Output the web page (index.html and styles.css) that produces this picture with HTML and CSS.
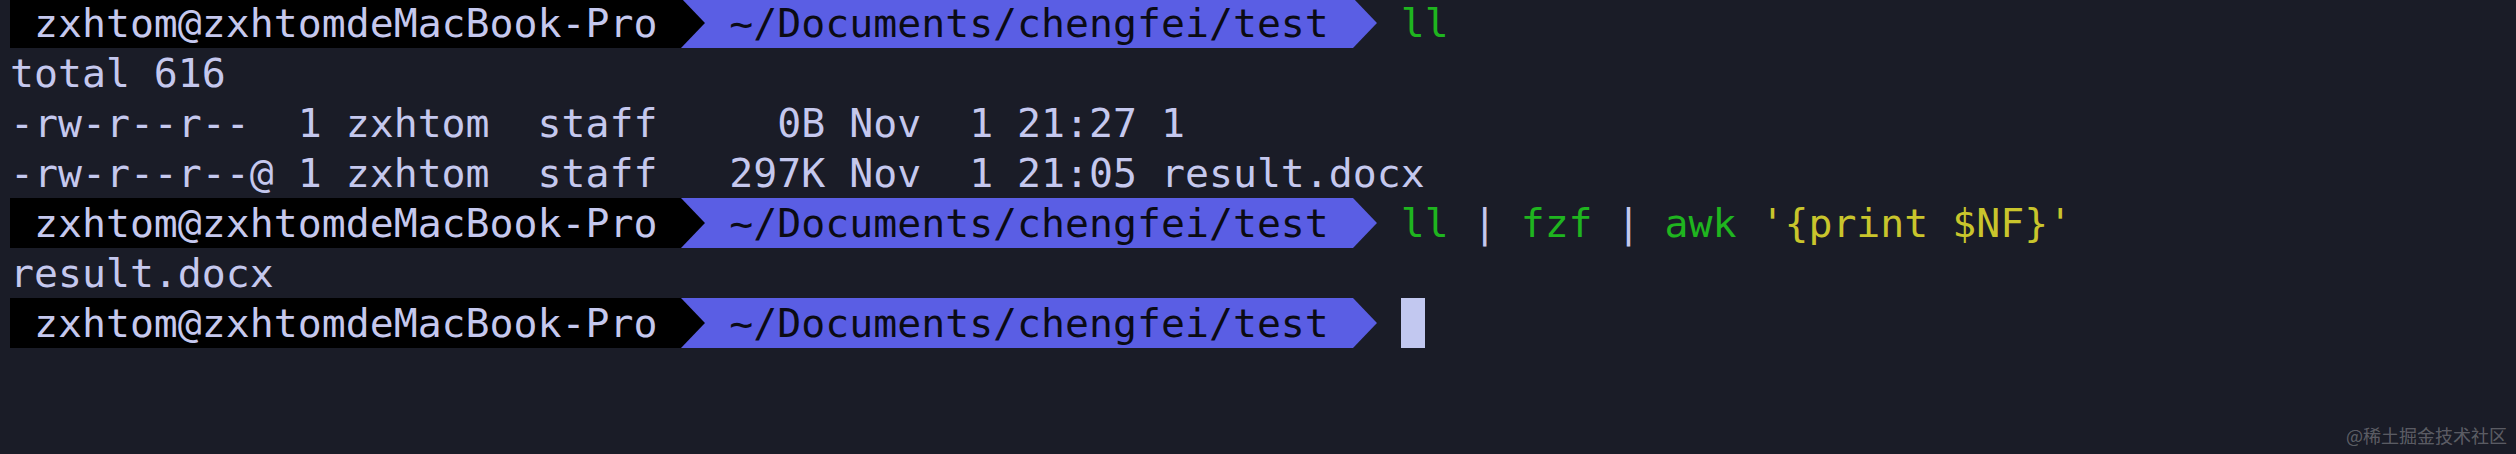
FILE: index.html
```html
<!DOCTYPE html>
<html lang="zh">
<head>
<meta charset="utf-8">
<title>Terminal</title>
<link rel="stylesheet" href="styles.css">
</head>
<body>
<div class="term">
  <div class="line">
    <span class="seg host"> zxhtom@zxhtomdeMacBook-Pro </span><span class="sep sep-host"><svg viewBox="0 0 24 50" preserveAspectRatio="none"><polygon points="0,0 24,25 0,50"/></svg></span><span class="seg path"> ~/Documents/chengfei/test </span><span class="sep sep-path"><svg viewBox="0 0 24 50" preserveAspectRatio="none"><polygon points="0,0 24,25 0,50"/></svg></span><span class="txt"> </span><span class="cmd">ll</span>
  </div>
  <div class="line"><span class="txt">total 616</span></div>
  <div class="line"><span class="txt">-rw-r--r--  1 zxhtom  staff     0B Nov  1 21:27 1</span></div>
  <div class="line"><span class="txt">-rw-r--r--@ 1 zxhtom  staff   297K Nov  1 21:05 result.docx</span></div>
  <div class="line">
    <span class="seg host"> zxhtom@zxhtomdeMacBook-Pro </span><span class="sep sep-host"><svg viewBox="0 0 24 50" preserveAspectRatio="none"><polygon points="0,0 24,25 0,50"/></svg></span><span class="seg path"> ~/Documents/chengfei/test </span><span class="sep sep-path"><svg viewBox="0 0 24 50" preserveAspectRatio="none"><polygon points="0,0 24,25 0,50"/></svg></span><span class="txt"> </span><span class="cmd">ll</span><span class="txt"> | </span><span class="cmd">fzf</span><span class="txt"> | </span><span class="cmd">awk</span><span class="txt"> </span><span class="str">'{print $NF}'</span>
  </div>
  <div class="line"><span class="txt">result.docx</span></div>
  <div class="line">
    <span class="seg host"> zxhtom@zxhtomdeMacBook-Pro </span><span class="sep sep-host"><svg viewBox="0 0 24 50" preserveAspectRatio="none"><polygon points="0,0 24,25 0,50"/></svg></span><span class="seg path"> ~/Documents/chengfei/test </span><span class="sep sep-path"><svg viewBox="0 0 24 50" preserveAspectRatio="none"><polygon points="0,0 24,25 0,50"/></svg></span><span class="txt"> </span><span class="cursor"></span>
  </div>
</div>
<div class="watermark">@稀土掘金技术社区</div>
</body>
</html>
```
FILE: styles.css
```css
html, body {
  margin: 0;
  padding: 0;
}
body {
  width: 2516px;
  height: 454px;
  background: #1a1c27;
  overflow: hidden;
  position: relative;
}
.term {
  margin: -2px 0 0 10px;
  font-family: "DejaVu Sans Mono", "Liberation Mono", monospace;
  font-size: 39.85px;
  line-height: 50px;
  color: #c5c8ee;
}
.line {
  display: flex;
  height: 50px;
  white-space: pre;
}
.line span {
  display: block;
  height: 50px;
}
.host {
  background: #000000;
  color: #c5c8ee;
}
.path {
  background: #5a5ee4;
  color: #0b0b14;
}
.sep {
  width: 1ch;
}
.sep svg {
  display: block;
  width: 100%;
  height: 100%;
}
.sep-host {
  background: #5a5ee4;
}
.sep-host polygon {
  fill: #000000;
}
.sep-path polygon {
  fill: #5a5ee4;
}
.cmd {
  color: #1fb51f;
}
.str {
  color: #c9c52c;
}
.cursor {
  width: 1ch;
  background: #c2c8f0;
}
.watermark {
  position: absolute;
  right: 9px;
  bottom: 9px;
  font-family: "Noto Sans CJK SC", "Noto Sans", sans-serif;
  font-size: 18px;
  line-height: 20px;
  color: rgba(255, 255, 255, 0.3);
}
```
